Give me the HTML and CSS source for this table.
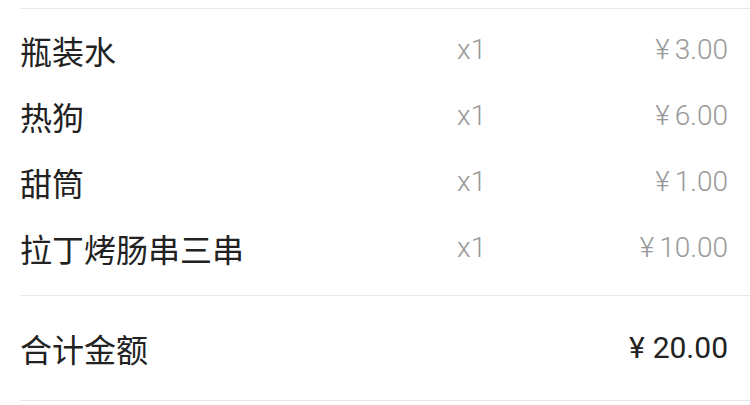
FILE: index.html
```html
<!DOCTYPE html>
<html lang="zh-CN">
<head>
<meta charset="utf-8">
<link rel="stylesheet" href="styles.css">
</head>
<body>
<div class="order">
  <div class="items">
    <div class="row"><span class="name">瓶装水</span><span class="qty">x1</span><span class="price"><span class="yen">¥</span>3.00</span></div>
    <div class="row"><span class="name">热狗</span><span class="qty">x1</span><span class="price"><span class="yen">¥</span>6.00</span></div>
    <div class="row"><span class="name">甜筒</span><span class="qty">x1</span><span class="price"><span class="yen">¥</span>1.00</span></div>
    <div class="row"><span class="name">拉丁烤肠串三串</span><span class="qty">x1</span><span class="price"><span class="yen">¥</span>10.00</span></div>
  </div>
  <div class="total">
    <span class="name">合计金额</span><span class="sum"><span class="yen yen-lg">¥</span>20.00</span>
  </div>
</div>
</body>
</html>
```
FILE: styles.css
```css
html, body {
  margin: 0;
  padding: 0;
  background: #ffffff;
}
.order {
  margin-top: 8px;
  margin-left: 20px;
  font-family: "Noto Sans CJK SC", sans-serif;
  color: #222;
}
.items {
  border-top: 1px solid #e8e8e8;
  border-bottom: 1px solid #e8e8e8;
  padding: 8px 22px 14px 0;
}
.row {
  display: grid;
  grid-template-columns: 437px 1fr auto;
  align-items: center;
  height: 66px;
}
.name {
  font-size: 32px;
  line-height: 1;
}
.qty, .price, .sum {
  font-family: Roboto, "Liberation Sans", sans-serif;
  font-weight: 300;
  font-size: 28px;
  line-height: 1;
}
.qty, .price {
  color: #999;
}
.yen {
  margin-right: 5px;
}
.yen-lg {
  margin-right: 8px;
}
.total {
  display: flex;
  justify-content: space-between;
  align-items: center;
  height: 104px;
  padding-right: 22px;
  border-bottom: 1px solid #e8e8e8;
}
.sum {
  color: #222;
  font-size: 30px;
  font-weight: 400;
}
```
